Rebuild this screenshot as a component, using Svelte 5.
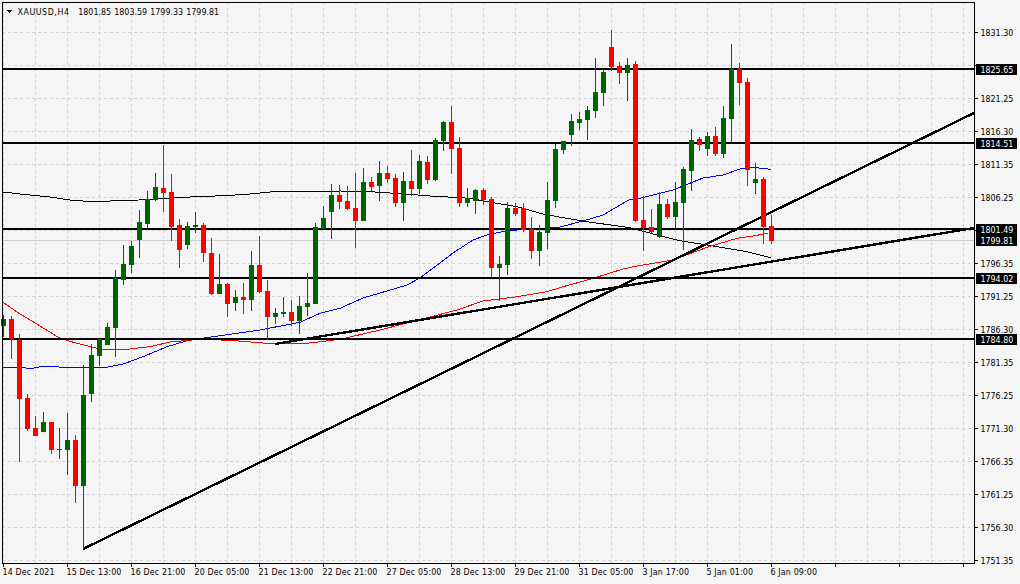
<script lang="ts">
  const W = 1020;
  const H = 584;
  const LEFT = 2;
  const TOP = 2;
  const RIGHT = 974;
  const BOTTOM = 563;

  // candle rows: body top, body bottom, wick top, wick bottom, up?
  // pixel values read straight off the H4 chart, 8px per bar starting at x=3
  const rows: [number, number, number, number, number][] = [
    [319, 326, 315, 337, 1], [319, 339, 316, 359, 0], [340, 399, 334, 462, 0], [398, 429, 394, 431, 0],
    [428, 436, 416, 436, 0], [422, 432, 412, 432, 1], [422, 450, 422, 454, 0], [449, 450, 428, 459, 1],
    [440, 450, 413, 475, 1], [440, 486, 435, 503, 0], [395, 486, 365, 549, 1], [355, 394, 344, 402, 1],
    [339, 356, 339, 366, 1], [327, 345, 323, 345, 1], [278, 328, 270, 357, 1], [264, 280, 245, 285, 1],
    [246, 265, 241, 273, 1], [222, 240, 210, 258, 1], [199, 224, 191, 230, 1], [187, 200, 173, 201, 1],
    [188, 193, 145, 212, 0], [192, 227, 174, 241, 0], [225, 250, 219, 268, 0], [226, 245, 222, 249, 1],
    [225, 227, 212, 233, 1], [225, 253, 223, 262, 0], [253, 294, 238, 295, 0], [284, 294, 254, 294, 1],
    [284, 304, 283, 317, 0], [297, 303, 290, 311, 1], [297, 300, 283, 314, 0], [265, 300, 251, 311, 1],
    [265, 292, 236, 293, 0], [291, 317, 280, 340, 0], [313, 317, 308, 324, 1], [312, 314, 297, 317, 1],
    [312, 321, 300, 326, 0], [306, 321, 296, 334, 1], [303, 307, 273, 316, 1], [227, 304, 223, 304, 1],
    [218, 229, 206, 229, 1], [195, 212, 184, 239, 1], [195, 202, 185, 209, 0], [201, 209, 186, 210, 0],
    [208, 221, 173, 248, 0], [182, 221, 168, 221, 1], [182, 187, 177, 191, 0], [173, 186, 161, 201, 1],
    [173, 179, 166, 183, 0], [178, 203, 174, 207, 0], [181, 203, 172, 221, 1], [181, 189, 150, 196, 0],
    [161, 189, 155, 194, 1], [162, 180, 156, 184, 0], [140, 180, 138, 181, 1], [122, 141, 121, 151, 1],
    [122, 149, 106, 174, 0], [148, 203, 137, 207, 0], [198, 203, 188, 207, 1], [190, 201, 189, 214, 1],
    [190, 200, 188, 205, 0], [199, 268, 197, 277, 0], [264, 268, 256, 301, 1], [208, 265, 202, 275, 1],
    [208, 214, 203, 216, 0], [208, 230, 203, 232, 0], [229, 251, 217, 259, 0], [232, 251, 225, 266, 1],
    [200, 233, 182, 249, 1], [149, 201, 144, 208, 1], [141, 150, 141, 154, 1], [121, 135, 114, 146, 1],
    [119, 123, 112, 130, 1], [110, 120, 106, 140, 1], [92, 111, 58, 118, 1], [72, 93, 70, 106, 1],
    [47, 67, 30, 71, 0], [66, 73, 62, 84, 0], [65, 73, 58, 101, 1], [64, 221, 61, 222, 0],
    [220, 228, 196, 251, 0], [227, 232, 209, 233, 0], [204, 237, 192, 238, 1], [204, 217, 199, 219, 0],
    [202, 217, 182, 229, 1], [169, 203, 167, 250, 1], [140, 171, 129, 191, 1], [139, 145, 137, 151, 0],
    [136, 149, 132, 156, 1], [136, 154, 127, 156, 0], [118, 154, 106, 158, 1], [69, 119, 44, 142, 1],
    [69, 83, 63, 105, 0], [82, 170, 78, 186, 0], [179, 183, 163, 194, 1], [179, 227, 177, 244, 0],
    [226, 241, 215, 244, 0],
  ];

  const candles = rows.map(([top, bottom, high, low, up], i) => ({
    x: 3 + i * 8,
    top,
    bottom,
    high,
    low,
    color: up ? '#006400' : '#ff0000',
  }));

  // an empty label keeps the grid row where a level tag covers the price
  const priceLabels = [
    '1831.30', '', '1821.25', '1816.30', '1811.35', '1806.25', '', '1796.35', '1791.25',
    '1786.30', '1781.35', '1776.25', '1771.30', '1766.35', '1761.25', '1756.30', '1751.35',
  ];
  const gridY = priceLabels.map((_, i) => 32 + i * 33);
  const gridX = Array.from({ length: 31 }, (_, i) => 3 + i * 32);

  const timeLabels = [
    '14 Dec 2021', '15 Dec 13:00', '16 Dec 21:00', '20 Dec 05:00', '21 Dec 13:00', '22 Dec 21:00', '27 Dec 05:00',
    '28 Dec 13:00', '29 Dec 21:00', '31 Dec 05:00', '3 Jan 17:00', '5 Jan 01:00', '6 Jan 09:00',
  ];

  const levels = [
    { y: 69, label: '1825.65' },
    { y: 143, label: '1814.51' },
    { y: 229, label: '1801.49' },
    { y: 278, label: '1794.02' },
    { y: 339, label: '1784.80' },
  ];

  const ohlc = [
    { x: 78.3, value: '1801.85' },
    { x: 114.3, value: '1803.59' },
    { x: 150.3, value: '1799.33' },
    { x: 186.3, value: '1799.81' },
  ];

  const black =
    '3,192 20,194 50,197 70,200 90,201.5 130,200.5 190,197 215,196 245,194.5 270,192 340,191 370,191.7 410,194.3 430,196 460,197.7 470,198.3 487,201.7 517,206.7 543,214 563,217.7 587,221.7 630,227.7 657,235 680,240.7 713,246 747,251.7 771,257.7';
  const blue =
    '3,367 20,367 30,368.7 43,366.3 75,367.7 107,367.3 123,364 143,356.7 167,346.7 187,340.7 213,336.7 260,330 300,322.3 320,313.3 340,308.3 363,298 387,291 407,285 420,278 453,253 473,240 487,235 507,230.7 560,227 583,221 603,215 630,199.3 640,198.3 673,190 703,178 723,175 740,169 753,167.3 771,169.3';
  const red =
    '3,302.3 20,314 33,321.7 60,338.3 77,343.3 100,349 127,349.3 150,346.7 170,342 200,339.3 230,340.3 267,343.3 307,343.3 340,339.3 380,330 430,317 457,310 483,301 517,296.7 547,291.7 563,286.7 590,279.3 622,269.3 637,266 673,260 707,247.3 737,238.3 753,236 768,233.3';
</script>

<div class="terminal">
  <svg class="chart" width={W} height={H} viewBox="0 0 {W} {H}">
    {#each gridY as y}
      <line class="grid" x1={LEFT} x2={RIGHT} y1={y + 0.5} y2={y + 0.5} />
      <line class="tick" x1={RIGHT} x2={RIGHT + 4} y1={y + 0.5} y2={y + 0.5} />
    {/each}
    {#each gridX as x, i}
      <line class="grid" x1={x + 0.5} x2={x + 0.5} y1={TOP} y2={BOTTOM} />
      {#if i % 2 === 0}
        <line class="tick" x1={x + 0.5} x2={x + 0.5} y1={BOTTOM} y2={BOTTOM + 4} />
      {/if}
    {/each}

    <line class="bid" x1={LEFT} x2={RIGHT} y1="240.5" y2="240.5" />

    <polyline class="ma" stroke="#000000" points={black} />
    <polyline class="ma" stroke="#0000ff" points={blue} />
    <polyline class="ma" stroke="#ff0000" points={red} />

    {#each levels as level}
      <line class="level" x1={LEFT} x2={RIGHT} y1={level.y} y2={level.y} />
    {/each}
    <line class="level trend" x1="83" y1="549" x2={RIGHT} y2="113" />
    <line class="level trend" x1="275" y1="344" x2={RIGHT} y2="228" />

    {#each candles as c}
      <line stroke={c.color} class="wick" x1={c.x + 0.5} x2={c.x + 0.5} y1={c.high} y2={c.low} />
      <rect fill={c.color} class="body" x={c.x - 2} y={c.top} width="5" height={c.bottom - c.top} />
    {/each}

    <rect class="frame" x={LEFT + 0.5} y={TOP + 0.5} width={RIGHT - LEFT} height={BOTTOM - TOP} />

    <path d="M6.5 9.5h6.5l-3.25 3.5z" fill="#000" />
    <text class="axis symbol" x="17.5" y="14.5">XAUUSD,H4</text>
    {#each ohlc as item}
      <text class="axis" x={item.x} y="14.5">{item.value}</text>
    {/each}

    {#each priceLabels as label, i}
      {#if label}
        <text class="axis" x="980.5" y={gridY[i] + 4}>{label}</text>
      {/if}
    {/each}
    {#each timeLabels as label, i}
      <text class="axis time" x={i === 0 ? 2.5 : 2.5 + i * 64} y="575">{label}</text>
    {/each}

    {#each [...levels, { y: 240, label: '1799.81' }] as level}
      <rect class="tag" x="976" y={level.y - 5.5} width="41" height="11" />
      <text class="axis tag-text" x="980.5" y={level.y + 3.5}>{level.label}</text>
    {/each}
  </svg>
</div>

<style>
  :global(body) {
    margin: 0;
    background: #f5f5f5;
  }

  .terminal {
    width: 1020px;
    height: 584px;
    overflow: hidden;
  }

  .chart {
    display: block;
    shape-rendering: crispEdges;
  }

  .grid {
    stroke: #d3d3d3;
    stroke-dasharray: 3 3;
  }

  .tick {
    stroke: #000;
  }

  .bid {
    stroke: #cccccc;
  }

  .ma {
    fill: none;
    stroke-width: 1;
  }

  .level {
    stroke: #000;
    stroke-width: 2;
  }

  .trend {
    stroke-width: 2.4;
  }

  .wick {
    stroke-width: 1;
  }

  .frame {
    fill: none;
    stroke: #000;
  }

  .tag {
    fill: #000;
  }

  .axis {
    font-family: "DejaVu Sans Condensed", "DejaVu Sans", sans-serif;
    font-size: 8.8px;
    fill: #000;
  }

  .symbol {
    letter-spacing: 0.55px;
  }

  .time {
    letter-spacing: 0.15px;
  }

  .tag-text {
    fill: #fff;
  }
</style>
